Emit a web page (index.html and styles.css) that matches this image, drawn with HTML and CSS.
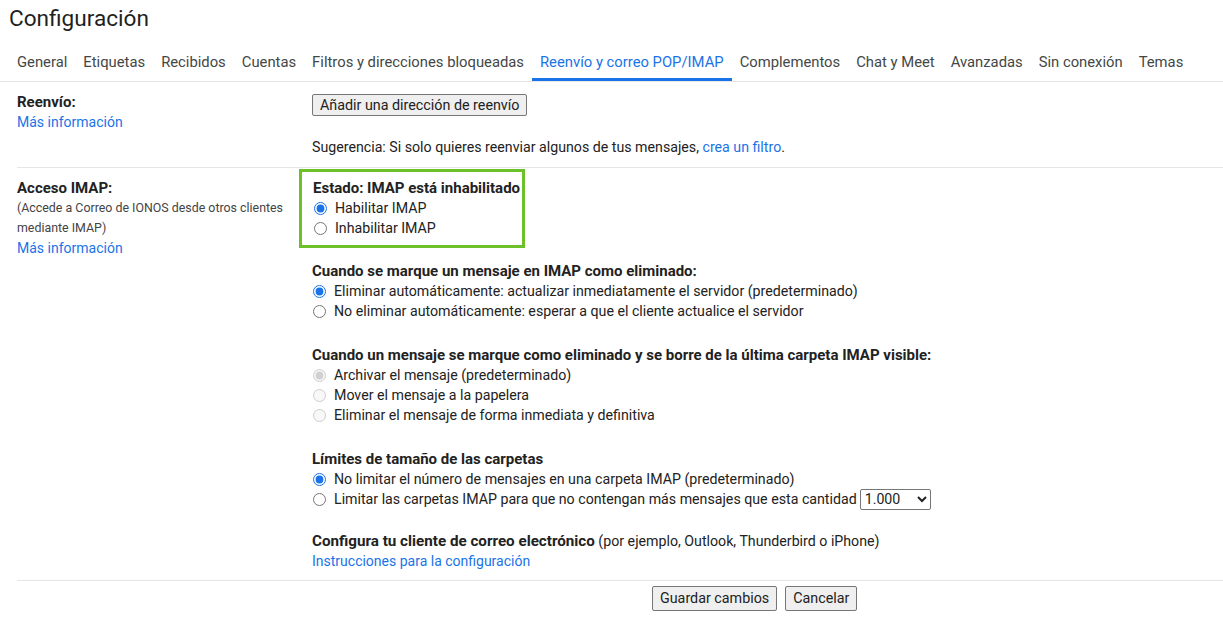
FILE: index.html
```html
<!DOCTYPE html>
<html lang="es">
<head>
<meta charset="utf-8">
<title>Configuración</title>
<link rel="stylesheet" href="styles.css">
</head>
<body>
<div class="page">
  <h1 class="title">Configuración</h1>
  <nav class="tabs">
    <a class="tab">General</a>
    <a class="tab">Etiquetas</a>
    <a class="tab">Recibidos</a>
    <a class="tab">Cuentas</a>
    <a class="tab">Filtros y direcciones bloqueadas</a>
    <a class="tab active">Reenvío y correo POP/IMAP</a>
    <a class="tab">Complementos</a>
    <a class="tab">Chat y Meet</a>
    <a class="tab">Avanzadas</a>
    <a class="tab">Sin conexión</a>
    <a class="tab">Temas</a>
  </nav>

  <div class="settings">
    <section class="row row-first">
      <div class="label">
        <div class="label-title">Reenvío:</div>
        <a class="link">Más información</a>
      </div>
      <div class="content">
        <button class="btn btn-add">Añadir una dirección de reenvío</button>
        <p class="hint">Sugerencia: Si solo quieres reenviar algunos de tus mensajes, <a class="link">crea un filtro</a>.</p>
      </div>
    </section>

    <section class="row row-imap">
      <div class="label">
        <div class="label-title">Acceso IMAP:</div>
        <div class="label-note">(Accede a Correo de IONOS desde otros clientes mediante IMAP)</div>
        <a class="link">Más información</a>
      </div>
      <div class="content">
        <div class="status-box">
          <div class="heading">Estado: IMAP está inhabilitado</div>
          <label class="opt"><input type="radio" name="imap" checked><span>Habilitar IMAP</span></label>
          <label class="opt"><input type="radio" name="imap"><span>Inhabilitar IMAP</span></label>
        </div>

        <div class="group group-first">
          <div class="heading">Cuando se marque un mensaje en IMAP como eliminado:</div>
          <label class="opt"><input type="radio" name="del" checked><span>Eliminar automáticamente: actualizar inmediatamente el servidor (predeterminado)</span></label>
          <label class="opt"><input type="radio" name="del"><span>No eliminar automáticamente: esperar a que el cliente actualice el servidor</span></label>
        </div>

        <div class="group">
          <div class="heading">Cuando un mensaje se marque como eliminado y se borre de la última carpeta IMAP visible:</div>
          <label class="opt disabled"><input type="radio" name="exp" checked disabled><span>Archivar el mensaje (predeterminado)</span></label>
          <label class="opt disabled"><input type="radio" name="exp" disabled><span>Mover el mensaje a la papelera</span></label>
          <label class="opt disabled"><input type="radio" name="exp" disabled><span>Eliminar el mensaje de forma inmediata y definitiva</span></label>
        </div>

        <div class="group">
          <div class="heading">Límites de tamaño de las carpetas</div>
          <label class="opt"><input type="radio" name="lim" checked><span>No limitar el número de mensajes en una carpeta IMAP (predeterminado)</span></label>
          <label class="opt"><input type="radio" name="lim"><span>Limitar las carpetas IMAP para que no contengan más mensajes que esta cantidad</span>
            <select class="select"><option>1.000</option></select>
          </label>
        </div>

        <div class="group group-last">
          <div><span class="strong">Configura tu cliente de correo electrónico</span> (por ejemplo, Outlook, Thunderbird o iPhone)</div>
          <a class="link">Instrucciones para la configuración</a>
        </div>
      </div>
    </section>

    <div class="actions">
      <button class="btn btn-action">Guardar cambios</button>
      <button class="btn btn-action">Cancelar</button>
    </div>
  </div>
</div>
</body>
</html>
```

FILE: styles.css
```css
* { box-sizing: border-box; }

html, body {
  margin: 0;
  padding: 0;
  background: #ffffff;
}

body {
  font-family: Roboto, "Liberation Sans", Arial, sans-serif;
  font-size: 14.2px;
  line-height: 20px;
  color: #222222;
}

.page {
  padding: 0 0 0 9px;
}

.title {
  margin: 0;
  padding-top: 5px;
  height: 44px;
  font-size: 22.6px;
  line-height: 28px;
  font-weight: 400;
  color: #1f1f1f;
}

.tabs {
  display: flex;
  height: 38px;
  margin-left: -9px;
  padding-left: 9px;
  border-bottom: 1px solid #e6e6e6;
}

.tab {
  display: block;
  padding: 8px 8px 0;
  height: 37px;
  color: #444746;
  font-size: 14.8px;
  line-height: 20px;
  white-space: nowrap;
  cursor: pointer;
}

.tab.active {
  color: #1a73e8;
  border-bottom: 3px solid #1a73e8;
}

.settings {
  padding-left: 8px;
}

.row {
  display: grid;
  grid-template-columns: 295px 1fr;
  border-bottom: 1px solid #e6e6e6;
}

.row-first {
  padding: 10px 0 10px;
}

.row-imap {
  padding: 10px 0 9px;
}

.label-title {
  font-weight: 700;
  font-size: 15px;
  color: #222222;
}

.label-note {
  font-size: 12.4px;
  line-height: 20px;
  color: #444444;
  width: 280px;
}

.link {
  color: #1a73e8;
  font-size: 14px;
  text-decoration: none;
  cursor: pointer;
}

.hint .link {
  font-size: 14.2px;
}

.content {
  min-width: 0;
}

.btn {
  font-family: Roboto, "Liberation Sans", Arial, sans-serif;
  font-size: 14.3px;
  color: #222222;
  background: #efefef;
  border: 1px solid #767676;
  border-radius: 2px;
  cursor: pointer;
}

.btn-add {
  display: block;
  margin-top: 2px;
  height: 22px;
  padding: 0 7px;
  line-height: 18px;
}

.hint {
  margin: 21px 0 0;
}

.status-box {
  display: inline-block;
  margin: -9px 0 0 -13px;
  padding: 6px 2px 7px 11px;
  border: 3px solid #6cc12a;
}

.heading {
  font-weight: 700;
  font-size: 15px;
}

.strong {
  font-weight: 700;
  font-size: 15.2px;
}

.opt {
  display: flex;
  align-items: center;
  height: 20px;
  white-space: nowrap;
}

.opt input {
  width: 13px;
  height: 13px;
  margin: 0 8px 0 1px;
  accent-color: #1a73e8;
}

.opt.disabled {
  color: #222222;
}

.group {
  margin-top: 24px;
}

.group-first {
  margin-top: 13px;
}

.group-last {
  margin-top: 22px;
}

.select {
  margin-left: 3px;
  width: 71px;
  height: 21px;
  font-family: Roboto, "Liberation Sans", Arial, sans-serif;
  font-size: 14.2px;
  color: #222222;
  background: #ffffff;
  border: 1px solid #767676;
  border-radius: 2px;
}

.actions {
  display: flex;
  gap: 8px;
  padding: 5px 0 0 635px;
}

.btn-action {
  height: 25px;
  padding: 0 7px;
  line-height: 21px;
}
```
